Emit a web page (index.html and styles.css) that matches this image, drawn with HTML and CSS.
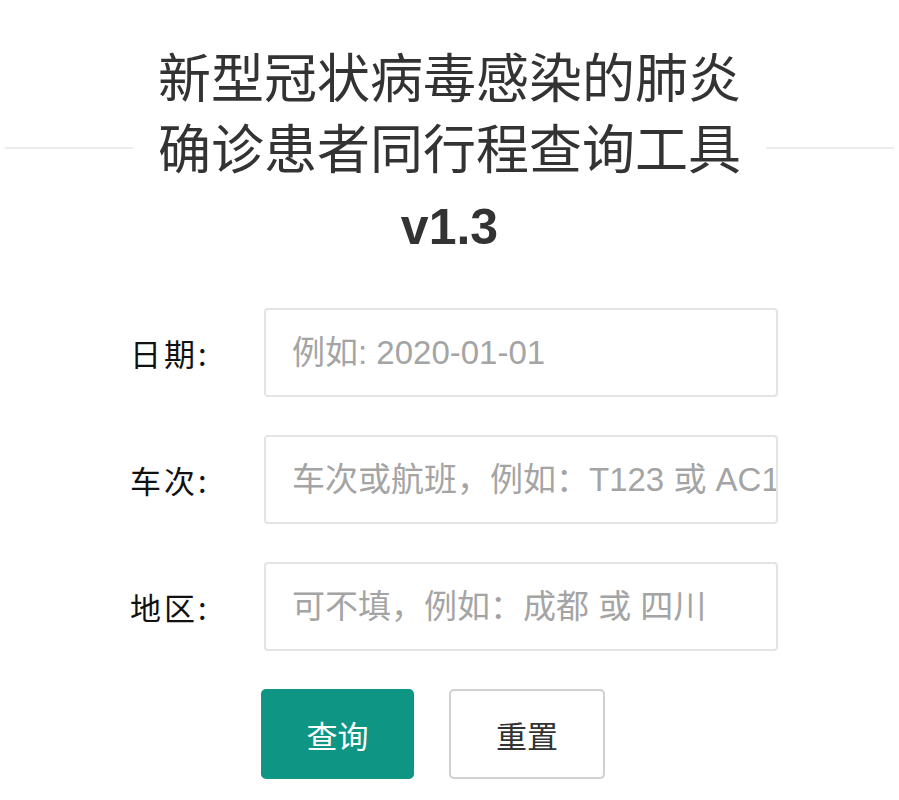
FILE: index.html
```html
<!DOCTYPE html>
<html lang="zh-CN">
<head>
  <meta charset="UTF-8">
  <meta name="viewport" content="width=device-width, initial-scale=1.0">
  <title>同行程查询工具</title>
  <link rel="stylesheet" href="styles.css">
</head>
<body>
  <header class="title-bar">
    <div class="title-block">
      <h1>新型冠状病毒感染的肺炎<br>确诊患者同行程查询工具</h1>
      <div class="version">v1.3</div>
    </div>
  </header>

  <form class="query-form" onsubmit="return false">
    <label for="date">日期:</label>
    <input type="text" id="date" placeholder="例如: 2020-01-01">

    <label for="train">车次:</label>
    <input type="text" id="train" placeholder="车次或航班，例如：T123 或 AC1234">

    <label for="area">地区:</label>
    <input type="text" id="area" placeholder="可不填，例如：成都 或 四川">

    <div class="actions">
      <button type="submit" class="btn btn-primary">查询</button>
      <button type="reset" class="btn">重置</button>
    </div>
  </form>
</body>
</html>
```

FILE: styles.css
```css
/* Base */
body {
  margin: 0;
  padding: 0 5px;
  background: #fff;
  color: #333;
  font-family: "Liberation Sans", "Noto Sans CJK SC", sans-serif;
}

/* Title with side lines */
.title-bar {
  display: flex;
  align-items: flex-start;
  padding-top: 40px;
}

.title-bar::before,
.title-bar::after {
  content: "";
  flex: 1;
  height: 2px;
  margin-top: 107px;
  background: #ececec;
}

.title-block {
  margin: 0 25px;
  text-align: center;
}

.title-block h1 {
  margin: 0;
  font-family: "Noto Sans CJK SC", sans-serif;
  font-size: 53px;
  font-weight: 400;
  line-height: 71px;
  color: #333;
}

.version {
  font-size: 50px;
  font-weight: 700;
  line-height: 90px;
  color: #333;
}

/* Form */
.query-form {
  display: grid;
  grid-template-columns: 134px 514px;
  row-gap: 38px;
  margin: 36px 0 0 125px;
}

.query-form label {
  align-self: center;
  font-family: "Noto Sans CJK SC", sans-serif;
  font-size: 31px;
  letter-spacing: 3px;
  color: #111;
}

.query-form input {
  box-sizing: border-box;
  width: 514px;
  height: 89px;
  padding: 0 0 0 26px;
  border: 2px solid #e4e4e4;
  border-radius: 4px;
  font-family: "Liberation Sans", "Noto Sans CJK SC", sans-serif;
  font-size: 33px;
  color: #333;
  outline: none;
}

.query-form input::placeholder {
  color: #a4a4a4;
}

.actions {
  grid-column: 2;
  display: flex;
  gap: 35px;
  margin-left: -3px;
}

.btn {
  box-sizing: border-box;
  width: 156px;
  height: 90px;
  border: 2px solid #d0d0d0;
  border-radius: 5px;
  background: #fff;
  font-family: "Noto Sans CJK SC", sans-serif;
  font-size: 31px;
  color: #333;
  cursor: pointer;
}

.btn-primary {
  width: 153px;
  border-color: #0e9583;
  background: #0e9583;
  color: #fff;
}
```
